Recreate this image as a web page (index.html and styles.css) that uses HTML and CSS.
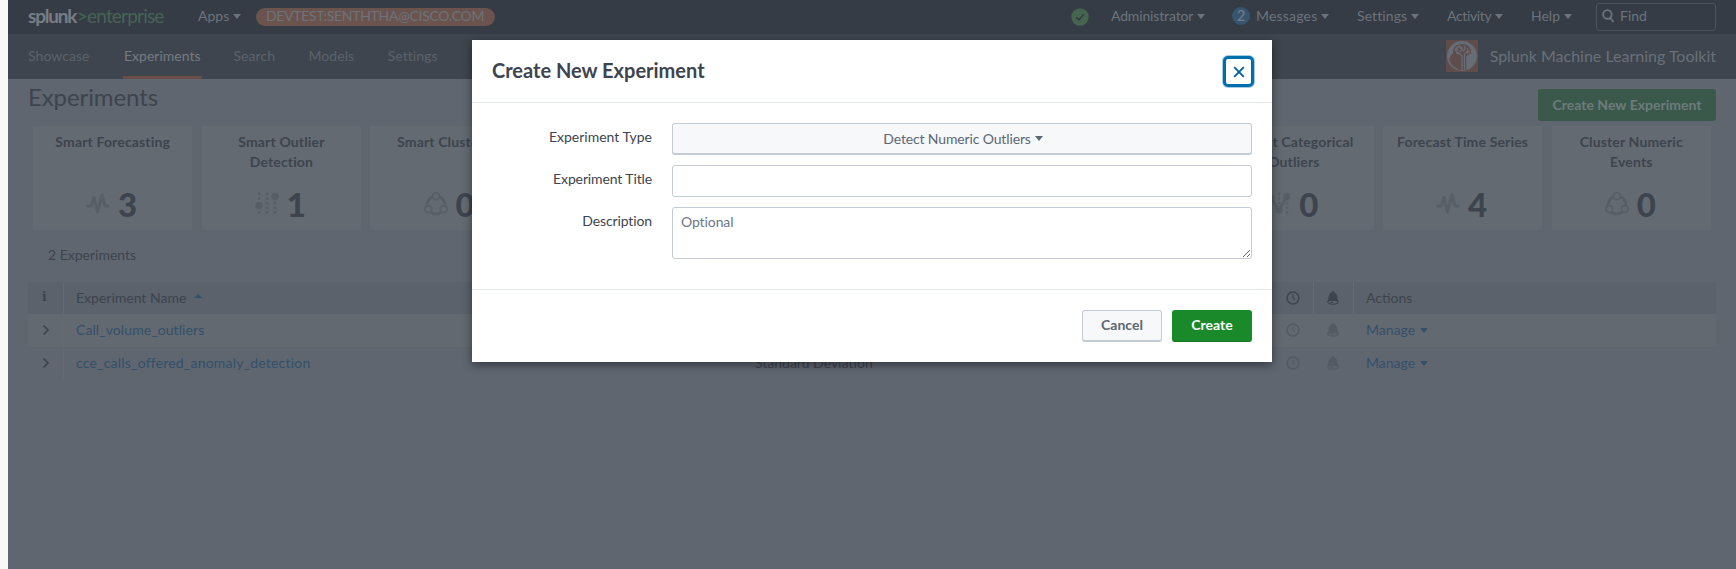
FILE: index.html
```html
<!DOCTYPE html>
<html lang="en">
<head>
<meta charset="utf-8">
<title>Experiments | Splunk Machine Learning Toolkit</title>
<link rel="stylesheet" href="styles.css">
</head>
<body>
<svg class="defs" aria-hidden="true">
  <symbol id="pulse" viewBox="0 0 24 24"><path d="M2 14H5L8 5.500L11.500 20L16 3L19 14H22" fill="none" stroke="currentColor" stroke-width="3" stroke-linecap="round" stroke-linejoin="round"/></symbol>
  <symbol id="dots" viewBox="0 0 24 24"><g fill="currentColor"><circle cx="4" cy="2" r="1.400"/><circle cx="4" cy="6.500" r="1.400"/><circle cx="4" cy="13.500" r="3.700"/><circle cx="4" cy="20.500" r="1.400"/><circle cx="12" cy="2" r="1.400"/><circle cx="12" cy="6.500" r="1.400"/><circle cx="12" cy="11.200" r="1.400"/><circle cx="12" cy="15.800" r="1.400"/><circle cx="12" cy="20.500" r="1.400"/><circle cx="20" cy="4.500" r="3.700"/><circle cx="20" cy="11.200" r="1.400"/><circle cx="20" cy="15.800" r="1.400"/><circle cx="20" cy="20.500" r="1.400"/></g></symbol>
  <symbol id="links" viewBox="0 0 24 24"><g fill="currentColor"><circle cx="4" cy="6" r="3.500"/><circle cx="12" cy="2" r="1.300"/><circle cx="12" cy="6.500" r="1.300"/><circle cx="12" cy="11" r="1.300"/><circle cx="12" cy="18" r="3.700"/><circle cx="20" cy="4.500" r="3.700"/><circle cx="20" cy="11.200" r="1.400"/><circle cx="20" cy="15.800" r="1.400"/><circle cx="20" cy="20.500" r="1.400"/></g><path d="M4 6L12 18L20 4.500" fill="none" stroke="currentColor" stroke-width="2.500"/></symbol>
  <symbol id="cluster" viewBox="0 0 24 24"><g fill="none" stroke="currentColor"><circle cx="12" cy="13" r="9" stroke-width="2.800"/><g class="cluster-node" stroke-width="1.600"><circle cx="12" cy="4.200" r="3.400"/><circle cx="4.300" cy="17" r="3.400"/><circle cx="19.700" cy="17" r="3.400"/></g></g></symbol>
  <symbol id="clock" viewBox="0 0 14 14"><circle cx="7" cy="7" r="5.900" fill="none" stroke="currentColor" stroke-width="1.500"/><path d="M7 3.300V7L8.800 9" fill="none" stroke="currentColor" stroke-width="1.100"/></symbol>
  <symbol id="bell" viewBox="0 0 14 14"><path d="M7 .2C8 .2 8.300.9 8.400 1.400C11 2.300 11.300 5 11.500 7.200C11.700 9 12.800 9.500 12.800 10.800C12.800 12.600 10.400 13.700 7 13.700S1.200 12.600 1.200 10.800C1.200 9.500 2.300 9 2.500 7.200C2.700 5 3 2.300 5.600 1.400C5.700.9 6 .2 7 .2Z" fill="currentColor"/><path class="bell-rim" d="M2.300 11C3.500 9.700 10.500 9.700 11.700 11C10.600 13 3.400 13 2.300 11Z"/><ellipse cx="6" cy="11.200" rx="1.500" ry=".8" fill="currentColor"/></symbol>
  <symbol id="chevron" viewBox="0 0 8 12"><path d="M1.500 1.500L6 6L1.500 10.500" fill="none" stroke="currentColor" stroke-width="1.700"/></symbol>
</svg>

<div class="page">
  <header class="topbar">
    <div class="brand"><b>splunk</b><span class="gt">&gt;</span><span class="edition">enterprise</span></div>
    <div class="apps menu">Apps<i class="caret"></i></div>
    <div class="account">DEVTEST:SENTHTHA@CISCO.COM</div>
    <div class="tools">
      <svg class="health" viewBox="0 0 18 18"><circle cx="9" cy="9" r="8.700"/><path d="M5.200 9.300L7.900 11.900L12.700 6.200"/></svg>
      <div class="menu admin">Administrator<i class="caret"></i></div>
      <div class="menu messages"><span class="badge">2</span><span class="t-msg">Messages</span><i class="caret"></i></div>
      <div class="menu settings">Settings<i class="caret"></i></div>
      <div class="menu activity"><span class="t-act">Activity</span><i class="caret"></i></div>
      <div class="menu help">Help<i class="caret"></i></div>
      <div class="find"><svg viewBox="0 0 14 16"><circle cx="5.800" cy="5.800" r="4.600"/><path d="M8.800 9.400L12.400 14"/></svg><span>Find</span></div>
    </div>
  </header>

  <nav class="appnav">
    <a>Showcase</a><a class="active">Experiments</a><a class="search">Search</a><a>Models</a><a>Settings</a><a>Docs</a>
    <div class="app">
      <svg class="app-logo" viewBox="0 0 32 32"><rect width="32" height="32" fill="#5f4d4b"/><circle cx="16" cy="16" r="14.200" fill="none" stroke="#666d76" stroke-width="1.500"/><path d="M14 2.200C21 .8 30 6 30.200 15.500C30.300 22 26 27.500 21 30L20 14L16 9L9 12L5 15L3 20C-.5 12 5 3 14 2.200Z" fill="#666d76"/><path d="M7 12C7 6.500 12 3.500 17 4C22 4.500 25.500 8 25 13C24 15 21.500 15 20.500 16V30L12 30V23L7.500 23.500L7 20L4.800 18.500L7 15.500Z" fill="#5f4d4b"/><path d="M16 30V16L12 12M18.500 30V14L22 11M21 29.500V17L24 14M9 11C10 7 13 6 15 7S17 11 14 11M13 14C10 14 10 10 12 9M18 6C20 7 19 10 17 11M21 8C23 10 21 12 20 12M13 5L15 9M24 11L21 13" fill="none" stroke="#666d76" stroke-width="1.200"/></svg>
      <span>Splunk Machine Learning Toolkit</span>
    </div>
  </nav>

  <section class="heading"><h1>Experiments</h1><button class="new">Create New Experiment</button></section>

  <section class="cards">
    <article><h2>Smart Forecasting</h2><p><svg><use href="#pulse"/></svg>3</p></article>
    <article><h2>Smart Outlier<br>Detection</h2><p><svg><use href="#dots"/></svg>1</p></article>
    <article><h2>Smart Clustering</h2><p><svg><use href="#cluster"/></svg>0</p></article>
    <article></article>
    <article></article>
    <article></article>
    <article></article>
    <article><h2>Detect Categorical<br>Outliers</h2><p><svg><use href="#links"/></svg>0</p></article>
    <article><h2>Forecast Time Series</h2><p><svg><use href="#pulse"/></svg>4</p></article>
    <article><h2>Cluster Numeric<br>Events</h2><p><svg><use href="#cluster"/></svg>0</p></article>
  </section>

  <div class="count">2 Experiments</div>

  <section class="table">
    <div class="row head"><span class="info">i</span><span class="name">Experiment Name<i class="sort"></i></span><span></span><span class="ico"><svg><use href="#clock"/></svg></span><span class="ico"><svg><use href="#bell"/></svg></span><span class="act">Actions</span></div>
    <div class="row odd"><span class="exp"><svg><use href="#chevron"/></svg></span><span class="name link short">Call_volume_outliers</span><span></span><span class="ico"><svg><use href="#clock"/></svg></span><span class="ico"><svg><use href="#bell"/></svg></span><span class="act link">Manage<i class="caret"></i></span></div>
    <div class="row"><span class="exp"><svg><use href="#chevron"/></svg></span><span class="name link wide">cce_calls_offered_anomaly_detection</span><span>Standard Deviation</span><span class="ico"><svg><use href="#clock"/></svg></span><span class="ico"><svg><use href="#bell"/></svg></span><span class="act link">Manage<i class="caret"></i></span></div>
  </section>
</div>

<div class="modal" role="dialog">
  <header><h3>Create New Experiment</h3><button class="close" aria-label="Close"><svg viewBox="0 0 12 12"><path d="M1.200 1.200L10.800 10.800M10.800 1.200L1.200 10.800"/></svg></button></header>
  <div class="form">
    <label class="type">Experiment Type</label><div class="select"><span>Detect Numeric Outliers</span><i class="caret"></i></div>
    <label>Experiment Title</label><input type="text">
    <label>Description</label><textarea placeholder="Optional"></textarea>
  </div>
  <footer><button class="cancel">Cancel</button><button class="create">Create</button></footer>
</div>
</body>
</html>
```
FILE: styles.css
```css
* { box-sizing: border-box; }
html, body { height: 100%; overflow: hidden; }
body {
  margin: 0;
  padding-left: 8px;
  background: #f8f8f8;
  font: 14px/20px Lato, "Open Sans", sans-serif;
  color: #3d444e;
}
h1, h2, h3, p { margin: 0; }
button, input, textarea { font: inherit; }
.defs { position: absolute; width: 0; height: 0; }
.page { height: 569px; background: #5f6670; }

.caret {
  display: inline-block;
  border: 4px solid transparent;
  border-top: 5px solid currentColor;
  border-bottom: 0;
  margin-left: 4px;
  vertical-align: 2px;
}

/* Global bar */
.topbar {
  display: flex;
  align-items: center;
  height: 34px;
  padding: 0 20px;
  background: #353c45;
  color: #6c737c;
}
.brand { display: flex; width: 170px; height: 26px; font-size: 19px; line-height: 24px; color: #777d86; }
.brand b { width: 49px; letter-spacing: -1.2px; }
.gt { width: 10px; color: #3f5f50; font-weight: 700; }
.edition { color: #466455; letter-spacing: -.8px; }
.menu { display: flex; align-items: center; height: 22px; margin-top: -2px; white-space: nowrap; }
.menu .caret { margin-left: 4px; }
.apps { width: 58px; }
.account {
  width: 239px;
  height: 18px;
  padding-left: 10px;
  border-radius: 9px;
  background: #6b544e;
  color: #6b737c;
  line-height: 16px;
  letter-spacing: -.3px;
}
.tools { display: flex; align-items: center; margin-left: auto; }
.health { width: 18px; height: 18px; margin: -1px 22px 0 0; }
.health circle { fill: #46654f; }
.health path { fill: none; stroke: #353c45; stroke-width: 1.600; }
.admin { width: 121px; letter-spacing: -.15px; }
.messages { width: 125px; }
.badge { width: 18px; height: 18px; margin-right: 6px; border-radius: 50%; background: #36566f; color: #727d88; text-align: center; line-height: 17px; font-size: 15px; }
.t-msg { letter-spacing: .2px; }
.settings { width: 90px; letter-spacing: .1px; }
.activity { width: 84px; }
.t-act { letter-spacing: -.35px; }
.help { width: 65px; }
.find { display: flex; align-items: center; width: 120px; height: 28px; margin-top: -1px; padding-left: 5px; border: 1px solid #4b525b; border-radius: 3px; }
.find svg { width: 13px; height: 15px; margin-right: 5px; fill: none; stroke: #6c737c; stroke-width: 2; }
.find span { margin-top: -2px; }

/* App navigation */
.appnav { display: flex; height: 45px; padding: 0 20px; background: #3e454e; color: #5b626c; }
.appnav a { display: flex; align-items: center; height: 45px; margin-right: 33.500px; padding-bottom: 1px; letter-spacing: .05px; }
.appnav a.active { margin: 0 32px 0 0; padding: 0 1px 1px; box-shadow: inset 0 -3px #6a4d46; color: #747b84; letter-spacing: 0; }
.app { display: flex; align-items: center; margin-left: auto; font-size: 16px; color: #69707a; }
.app span { margin-top: -1px; }
.app-logo { width: 32px; height: 32px; margin: -1px 12px 0 0; }

/* Page heading */
.heading { display: flex; justify-content: space-between; height: 47px; padding: 0 20px; }
h1 { padding-top: 3px; font-size: 24px; line-height: 30px; font-weight: 400; letter-spacing: -.1px; }
.new { width: 178px; height: 32px; margin-top: 10px; padding: 0 0 1px; border: 0; border-radius: 3px; background: #3a594b; color: #6d7b7d; font-weight: 700; }

/* Experiment type cards */
.cards { display: grid; grid-template-columns: repeat(10, 1fr); column-gap: 9.400px; height: 104px; margin: 0 25px; }
.cards article { padding-top: 6px; background: #646a71; text-align: center; }
h2 { height: 40px; font-size: 14px; line-height: 20px; letter-spacing: .15px; }
.cards p { display: flex; justify-content: center; align-items: center; height: 40px; margin-top: 12px; font-size: 33px; font-weight: 900; }
.cards svg { width: 24px; height: 24px; margin: 0 8px 0 -2px; color: #585e66; }
.cluster-node { fill: #646a71; }

.count { padding: 15px 0 0 40px; height: 52px; }

/* Experiments table */
.table { margin: 0 20px; }
.row { display: grid; grid-template-columns: 35px 679px 531px 40px 40px 363px; height: 33px; line-height: 31px; }
.row > span { padding-left: 12px; border-left: 1px solid transparent; }
.row > .name, .head > .act, .head > .ico:nth-child(5) { border-left-color: #646a73; }
.head { height: 32px; line-height: 32px; background: #5b626c; }
.odd { background: #636970; }
.row .info { padding-left: 13px; font: 700 12px/31px "DejaVu Serif", serif; }
.row .exp, .row .ico { display: flex; align-items: center; padding-left: 13px; color: #3d444e; }
.exp svg { width: 8px; height: 12px; margin-top: -1px; }
.row .ico { justify-content: center; padding: 0 1px 0 0; }
.ico svg { width: 14px; height: 14px; margin-top: -1px; }
.row:not(.head) .ico { color: #535a64; }
.bell-rim { fill: #5f6670; }
.link { color: #33506a; }
.act .caret { margin-left: 5px; }
.short { letter-spacing: .08px; }
.wide { letter-spacing: .2px; }
.sort { display: inline-block; margin-left: 8px; border: 4px solid transparent; border-bottom-color: #33506a; border-top: 0; vertical-align: 5px; }

/* Dialog */
.modal { position: absolute; left: 472px; top: 40px; width: 800px; height: 322px; background: #fff; box-shadow: 0 3px 9px rgba(0, 0, 0, .45); }
.modal header { display: flex; justify-content: space-between; height: 63px; padding: 15px 18px 0 20px; border-bottom: 1px solid #dfe3ea; }
h3 { font-size: 20px; line-height: 30px; font-weight: 700; }
.close { display: flex; align-items: center; justify-content: center; width: 31px; height: 31px; margin-top: 1px; padding: 0; border: 3px solid #006eaa; border-radius: 5px; background: #fff; box-shadow: 0 0 0 1px #a5cce2; }
.close svg { width: 12px; height: 12px; fill: none; stroke: #006298; stroke-width: 1.900; }
.form { display: grid; grid-template-columns: 180px 580px; column-gap: 20px; row-gap: 10px; height: 186px; padding-top: 20px; align-content: start; }
label { padding-top: 4px; text-align: right; letter-spacing: -.12px; }
.type { letter-spacing: 0; }
.select, input, textarea { display: block; width: 580px; height: 32px; margin: 0; border: 1px solid #c3cbd4; border-radius: 3px; background: #fff; }
.select { display: flex; align-items: center; justify-content: center; border-bottom-width: 2px; background: #f7f8fa; color: #5c6773; letter-spacing: -.14px; padding-left: 2px; }
textarea { height: 52px; padding: 4px 8px; resize: vertical; letter-spacing: -.1px; }
textarea::placeholder { color: #6b7785; opacity: 1; }
.modal footer { display: flex; justify-content: flex-end; gap: 10px; padding: 20px 20px 0; border-top: 1px solid #dfe3ea; }
.modal footer button { width: 80px; height: 32px; padding: 0 0 1px; border-radius: 3px; font-weight: 700; }
.cancel { border: 1px solid #c3cbd4; border-bottom-width: 2px; background: #f7f8fa; color: #5c6773; }
.create { border: 0; border-bottom: 1px solid #187724; background: #1a8929; color: #fff; }
```
